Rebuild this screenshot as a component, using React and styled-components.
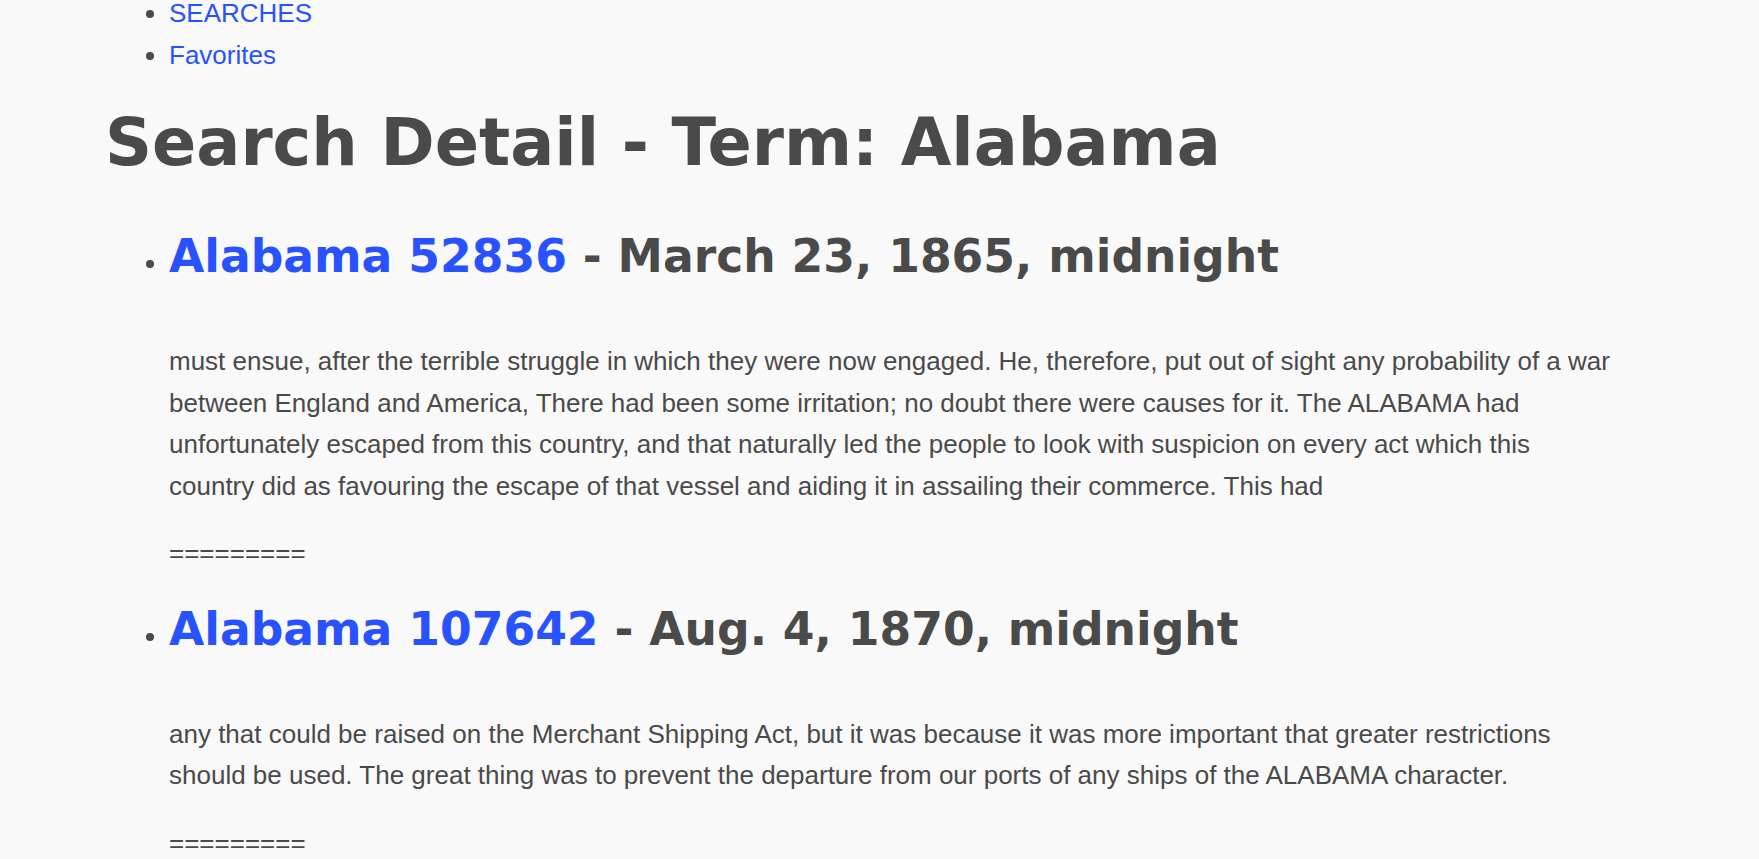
import React from "react";
import styled, { createGlobalStyle } from "styled-components";

const Global = createGlobalStyle`
  html, body { margin: 0; padding: 0; background: #f9f9f9; }
  body {
    font-family: "Liberation Sans", Arial, sans-serif;
    font-size: 26px;
    line-height: 41.6px;
    color: #4a4a4a;
  }
`;

const Page = styled.div`
  margin-left: 105px;
  width: 1511px;
`;

const NavList = styled.ul`
  margin: -7px 0 25px;
  padding-left: 64px;
  list-style: disc;
`;

const NavItem = styled.li``;

const Link = styled.a`
  color: #2952ff;
  text-decoration: none;
`;

const Title = styled.h1`
  font-family: "DejaVu Sans", Verdana, sans-serif;
  font-weight: bold;
  font-size: 65.3px;
  line-height: 75px;
  margin: 29px 0 50px;
`;

const ResultList = styled.ul`
  margin: 0;
  padding-left: 64px;
  list-style: disc;
`;

const Result = styled.li``;

const Heading = styled.h2`
  font-family: "DejaVu Sans", Verdana, sans-serif;
  font-weight: bold;
  font-size: 45.6px;
  line-height: 54px;
  margin: 28px 0 57px;
`;

const Excerpt = styled.p`
  margin: 0 0 25.6px;
`;

const results = [
  {
    id: "52836",
    date: "March 23, 1865, midnight",
    text:
      "must ensue, after the terrible struggle in which they were now engaged. He, therefore, put out of sight any probability of a war between England and America, There had been some irritation; no doubt there were causes for it. The ALABAMA had unfortunately escaped from this country, and that naturally led the people to look with suspicion on every act which this country did as favouring the escape of that vessel and aiding it in assailing their commerce. This had",
  },
  {
    id: "107642",
    date: "Aug. 4, 1870, midnight",
    text:
      "any that could be raised on the Merchant Shipping Act, but it was because it was more important that greater restrictions should be used. The great thing was to prevent the departure from our ports of any ships of the ALABAMA character.",
  },
];

export default function App() {
  return (
    <>
      <Global />
      <Page>
        <NavList>
          <NavItem>
            <Link href="#">SEARCHES</Link>
          </NavItem>
          <NavItem>
            <Link href="#">Favorites</Link>
          </NavItem>
        </NavList>
        <Title>Search Detail - Term: Alabama</Title>
        <ResultList>
          {results.map((r) => (
            <Result key={r.id}>
              <Heading>
                <Link href="#">Alabama {r.id}</Link> - {r.date}
              </Heading>
              <Excerpt>{r.text}</Excerpt>
              <Excerpt>=========</Excerpt>
            </Result>
          ))}
        </ResultList>
      </Page>
    </>
  );
}
